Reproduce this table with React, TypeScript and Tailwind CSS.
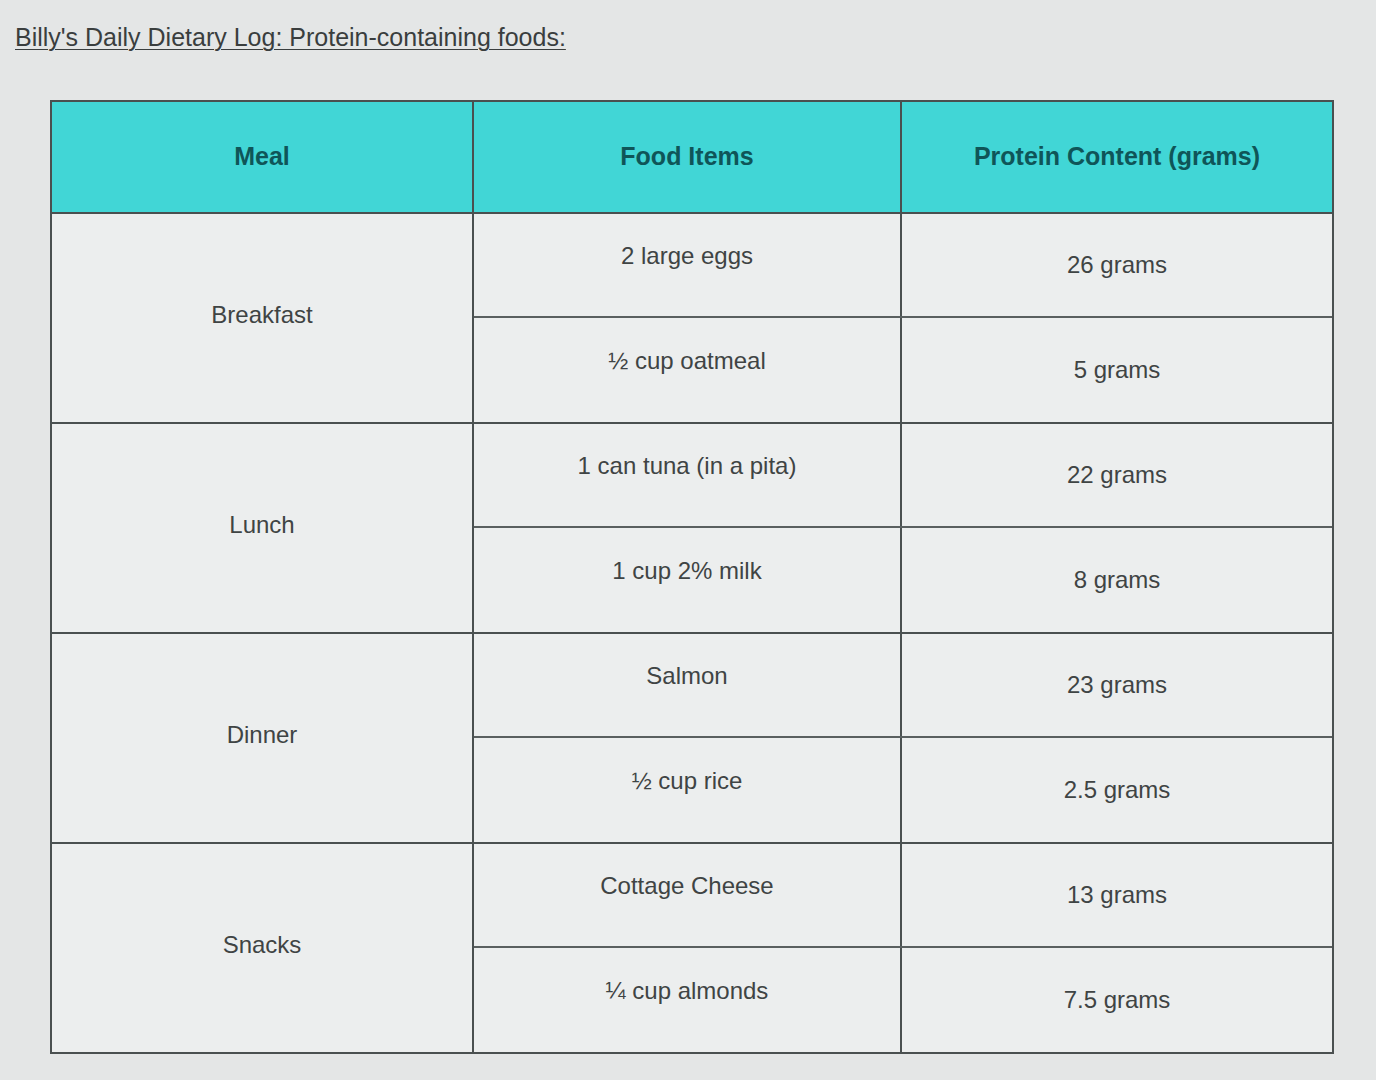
import React from 'react';

// Meal groups: each meal spans two food rows
const MEALS = [
  {
    meal: 'Breakfast',
    items: [
      { food: '2 large eggs', protein: '26 grams' },
      { food: '½ cup oatmeal', protein: '5 grams' },
    ],
  },
  {
    meal: 'Lunch',
    items: [
      { food: '1 can tuna (in a pita)', protein: '22 grams' },
      { food: '1 cup 2% milk', protein: '8 grams' },
    ],
  },
  {
    meal: 'Dinner',
    items: [
      { food: 'Salmon', protein: '23 grams' },
      { food: '½ cup rice', protein: '2.5 grams' },
    ],
  },
  {
    meal: 'Snacks',
    items: [
      { food: 'Cottage Cheese', protein: '13 grams' },
      { food: '¼ cup almonds', protein: '7.5 grams' },
    ],
  },
];

export default function App() {
  return (
    <div
      className="w-[1376px] h-[1080px] bg-[#e4e6e6] overflow-hidden text-[#3f4444]"
      style={{ fontFamily: '"Liberation Sans", Arial, sans-serif' }}
    >
      {/* Title */}
      <div className="pl-[15px] pt-[22px]">
        <h1 className="text-[25px] leading-[30px] underline underline-offset-[3px] decoration-1 text-[#3a3e3e]">
          Billy's Daily Dietary Log: Protein-containing foods:
        </h1>
      </div>

      {/* Table */}
      <div className="ml-[50px] mt-[48px] w-[1284px] border-2 border-[#4a5050] bg-[#eceeee]">
        {/* Header */}
        <div className="grid grid-cols-[422px_428px_1fr] h-[112px] bg-[#41d6d6] border-b-2 border-[#4a5050]">
          <div className="flex items-center justify-center border-r-2 border-[#4a5050] text-[25px] font-bold text-[#0f5558]">
            Meal
          </div>
          <div className="flex items-center justify-center border-r-2 border-[#4a5050] text-[25px] font-bold text-[#0f5558]">
            Food Items
          </div>
          <div className="flex items-center justify-center text-[25px] font-bold text-[#0f5558]">
            Protein Content (grams)
          </div>
        </div>

        {/* Body */}
        {MEALS.map((group, gi) => (
          <div
            key={group.meal}
            className={`grid grid-cols-[422px_1fr] ${gi < MEALS.length - 1 ? 'border-b-2 border-[#4a5050]' : ''}`}
          >
            <div className="flex items-center justify-center border-r-2 border-[#4a5050] text-[24px] pb-[6px]">
              {group.meal}
            </div>
            <div className="flex flex-col">
              {group.items.map((item, ii) => (
                <div
                  key={item.food}
                  className={`grid grid-cols-[428px_1fr] h-[104px] ${ii === 0 ? 'border-b-2 border-[#5a6060]' : ''}`}
                >
                  <div className="flex items-center justify-center border-r-2 border-[#4a5050] text-[24px] pb-[18px]">
                    {item.food}
                  </div>
                  <div className="flex items-center justify-center text-[24px]">
                    {item.protein}
                  </div>
                </div>
              ))}
            </div>
          </div>
        ))}
      </div>
    </div>
  );
}
